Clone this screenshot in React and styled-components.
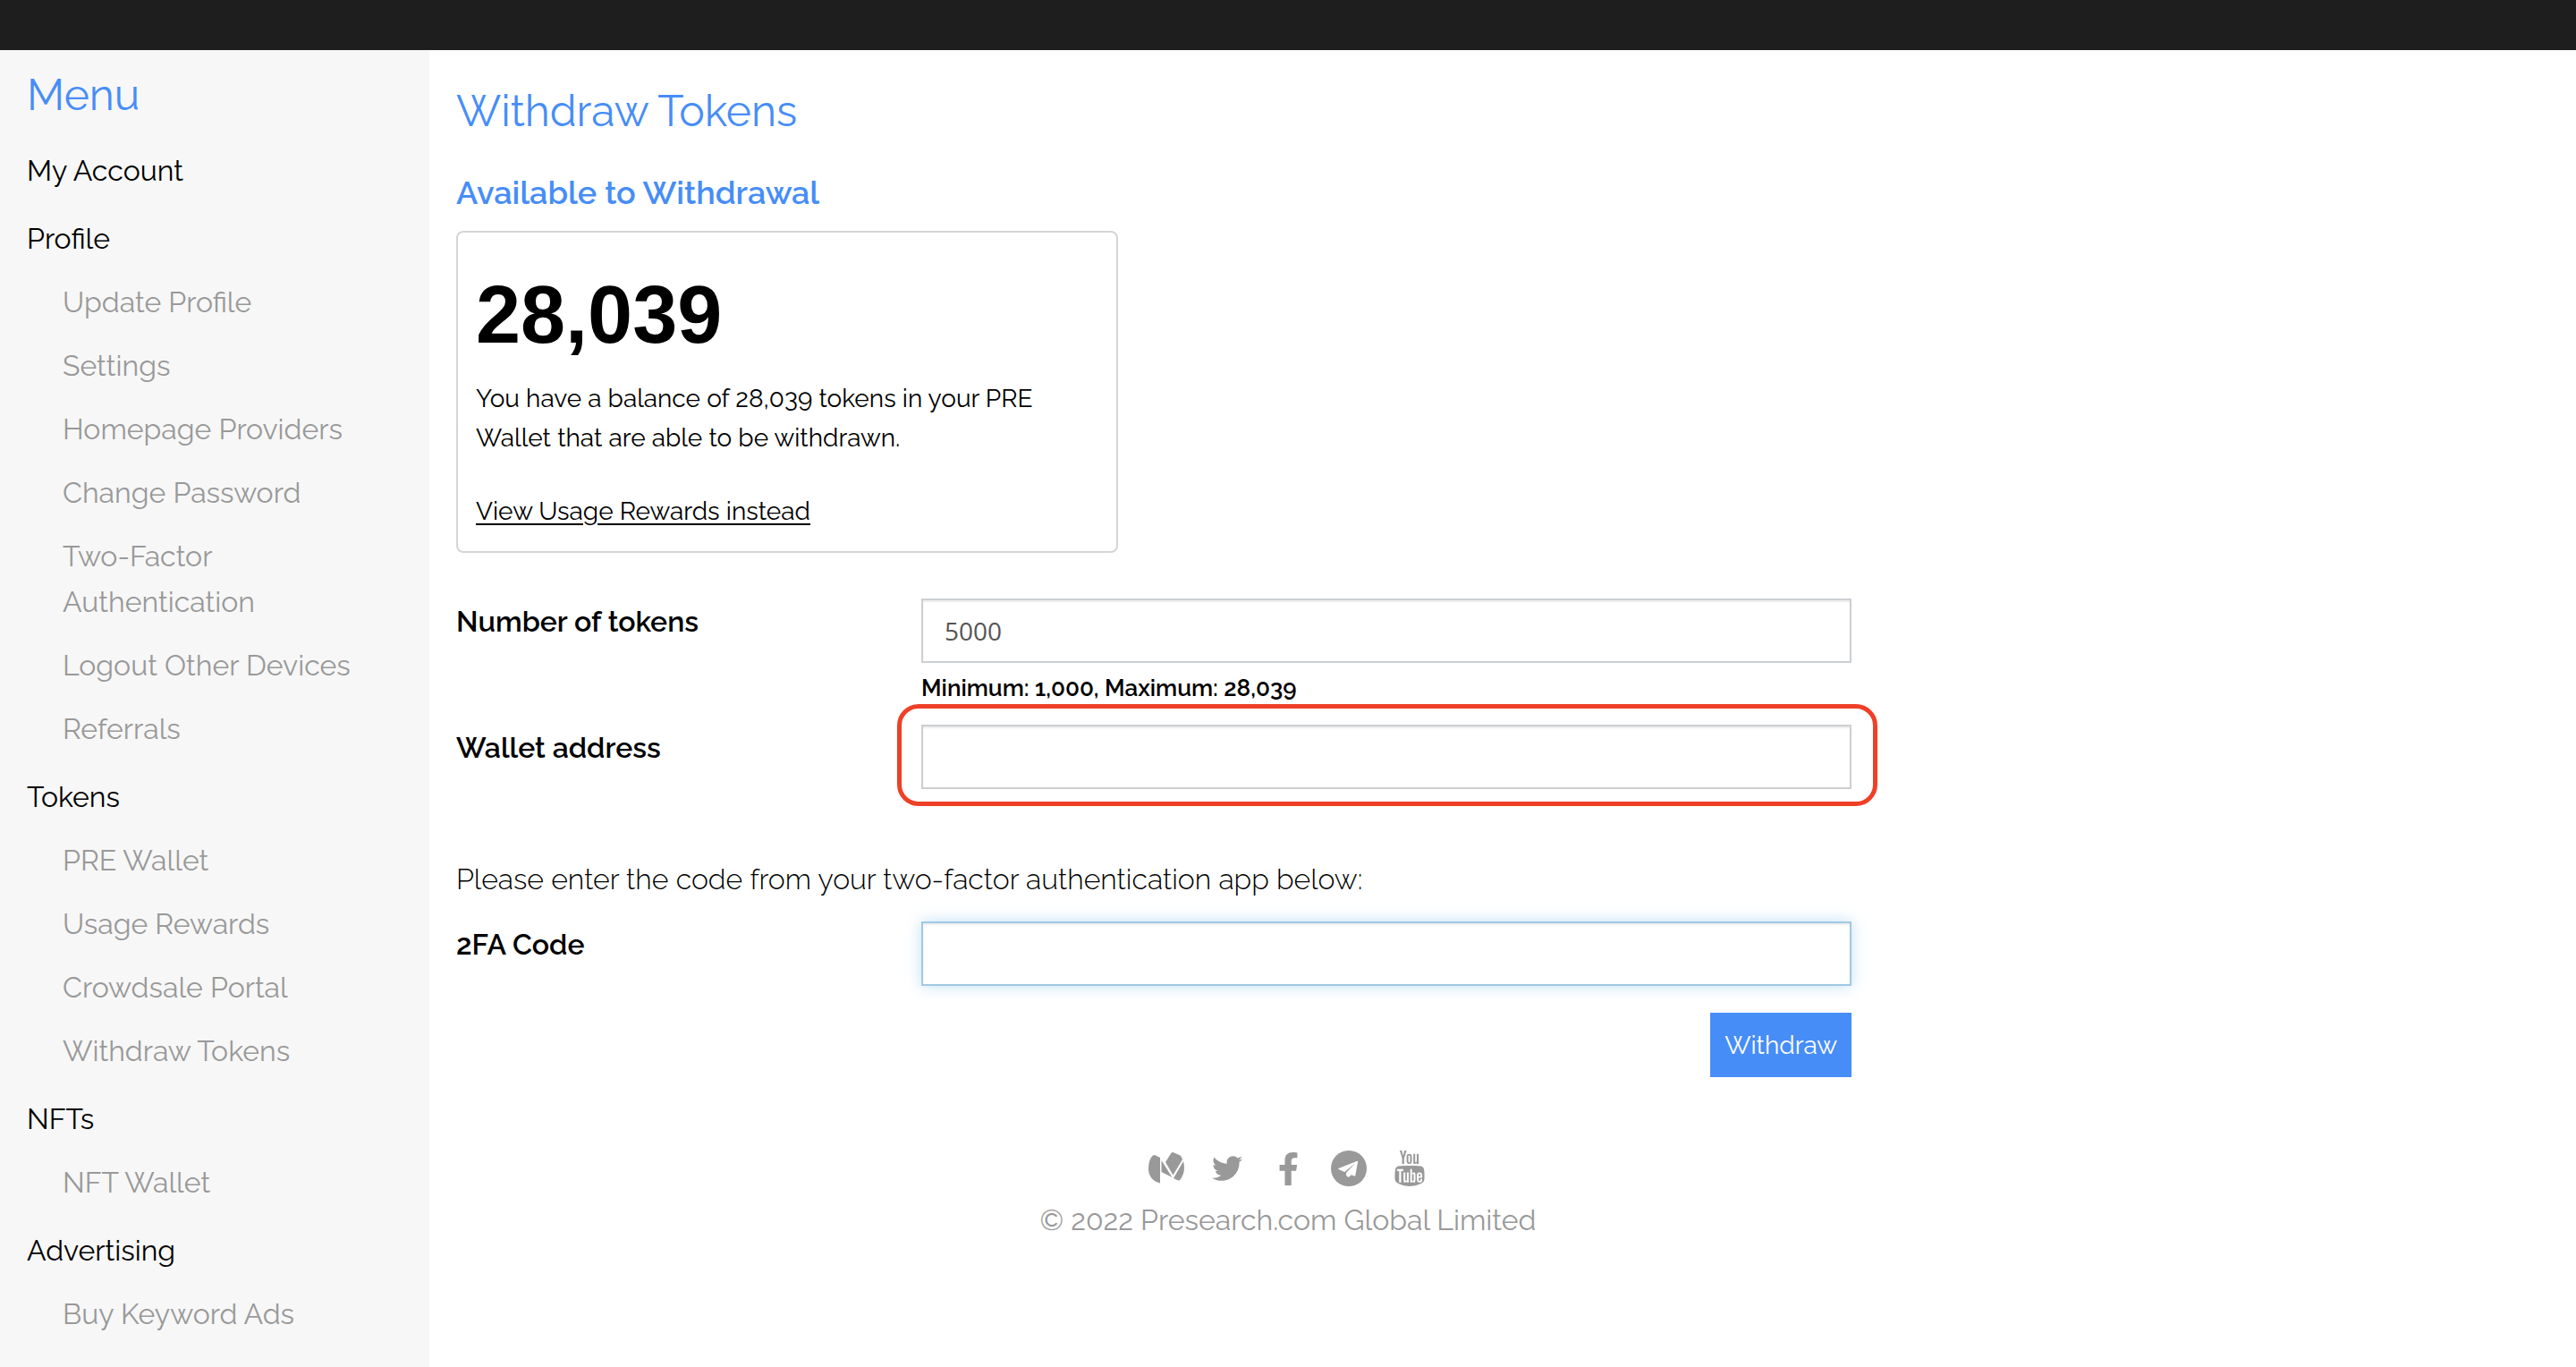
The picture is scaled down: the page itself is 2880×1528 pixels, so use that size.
import React from "react";
import styled, { createGlobalStyle, css } from "styled-components";
import { FaTwitter, FaFacebookF } from "react-icons/fa";
import { TfiYoutube } from "react-icons/tfi";

const GlobalStyle = createGlobalStyle`
  *, *::before, *::after { box-sizing: border-box; }
  body {
    margin: 0;
    background: #ffffff;
    color: #000000;
    font-family: Raleway, Lato, sans-serif;
    font-size: 32px;
    line-height: 51px;
  }
`;

const Page = styled.div`
  display: flex;
  flex-direction: column;
  min-height: 100vh;
`;

const TopBar = styled.header`
  flex: none;
  height: 56px;
  background: #1e1e1e;
`;

const Body = styled.div`
  flex: 1;
  display: grid;
  grid-template-columns: 1fr 4fr 1fr;
  grid-template-rows: auto 1fr;
`;

const Sidebar = styled.nav`
  grid-row: 1 / span 2;
  padding: 20px 30px;
  background: #f7f7f7;
`;

const Heading = styled.h1`
  margin: 0;
  color: #478df7;
  font-size: 48px;
  font-weight: 400;
  line-height: 60px;
`;

const MenuSection = styled.section`
  margin-top: 5px;
  &:first-of-type { margin-top: 19px; }
`;

const MenuTitle = styled.a`
  display: block;
  padding: 10px 0;
  color: #000000;
  text-decoration: none;
`;

const MenuList = styled.ul`
  margin: 0;
  padding: 0 40px;
  list-style: none;
`;

const MenuLink = styled.a`
  display: block;
  padding: 10px 0;
  color: #999999;
  text-decoration: none;
`;

const Main = styled.main`
  grid-column: 2 / span 2;
  width: 67.5%;
  padding: 38px 30px 0;
`;

const SubHeading = styled.h2`
  margin: 35px 0 17px;
  color: #478df7;
  font-size: 36px;
  font-weight: 600;
  line-height: 52px;
`;

const BalanceCard = styled.section`
  width: 740px;
  max-width: 100%;
  padding: 40px 20px 22px;
  border: 2px solid #d5d5d5;
  border-radius: 8px;
  font-size: 28px;
  line-height: 44px;
`;

const Amount = styled.strong`
  display: block;
  font-family: "Liberation Sans", Arial, sans-serif;
  font-size: 90px;
  line-height: 104px;
`;

const BalanceText = styled.p`
  margin: 20px 0 38px;
`;

const TextLink = styled.a`
  color: #000000;
  text-underline-offset: 4px;
`;

const Form = styled.form`
  margin-top: 51px;
`;

const FieldRow = styled.div`
  display: grid;
  grid-template-columns: 1fr 2fr;
  align-items: start;
`;

const Label = styled.label`
  font-weight: 600;
`;

const Control = styled.div`
  position: relative;
`;

const Input = styled.input`
  display: block;
  width: 100%;
  height: 72px;
  padding: 0 24px;
  border: 2px solid ${(p) => (p.$active ? "#9fc9e3" : "#cccfd2")};
  border-radius: 0;
  outline: none;
  background: #ffffff;
  color: #555555;
  font-family: "Open Sans", sans-serif;
  font-size: 28px;
  box-shadow: inset 0 2px 2px rgba(0, 0, 0, 0.08)
    ${(p) => p.$active && css`, 0 0 16px rgba(102, 175, 233, 0.4)`};
`;

const Hint = styled.small`
  display: block;
  padding: 5px 0 18px;
  font-size: 26px;
  font-weight: 600;
  line-height: 46px;
`;

const Highlight = styled.span`
  position: absolute;
  inset: -23px -29px -19px -27px;
  border: 5px solid #ee4027;
  border-radius: 24px;
  pointer-events: none;
`;

const Instruction = styled.p`
  margin: 75px 0 22px;
  font-weight: 300;
`;

const Actions = styled.div`
  display: flex;
  justify-content: flex-end;
  margin-top: 30px;
`;

const SubmitButton = styled.button`
  height: 72px;
  padding: 0 16px;
  border: 0;
  background: #478df7;
  color: #ffffff;
  font-family: inherit;
  font-size: 28px;
`;

const Footer = styled.footer`
  grid-column: 2;
  display: flex;
  flex-direction: column;
  align-items: center;
  gap: 10px;
  padding-top: 80px;
  color: #999999;
`;

const SocialLinks = styled.div`
  display: flex;
  gap: 28px;
`;

const SocialLink = styled.a`
  display: grid;
  place-items: center;
  width: 40px;
  height: 44px;
  color: #999999;
`;

const YoutubeIcon = styled(TfiYoutube)`
  width: 40px;
  height: 40px;
  clip-path: inset(0 3px 0 3px round 0 0 17px 17px / 0 0 9px 9px);
`;

const MediumIcon = () => (
  <svg width="40" height="36" viewBox="0 0 40 36" fill="currentColor" aria-hidden="true">
    <path d="M13 6v28.500Q0 31 0 18Q0 8 5 3.500Q6 2.500 8 3.500z" />
    <path d="M14.500 9l12 19l-12-6z" />
    <path d="M19 11l6-9.500Q26-.5 28 .2l7.500 3.300Q37 4.500 38 8L27.500 25.500z" />
    <path d="M39 10Q42 22 35.500 30.500Q34.500 32 32 31L28 29z" />
  </svg>
);

const TelegramIcon = () => (
  <svg width="40" height="40" viewBox="0 0 40 40" aria-hidden="true">
    <circle cx="20" cy="20" r="20" fill="currentColor" />
    <path
      d="M8.500 20L29.500 11.700Q30.300 11.700 30.100 12.600L27.300 28Q27 29 26 28.600L22.700 27.200L20.300 29.600Q19.600 30.200 18.600 29.300L17 27.800L17 25L28 13.500L15.300 24L9 21.300Q8 20.600 8.500 20z"
      fill="#ffffff"
    />
  </svg>
);

const menu = [
  { title: "My Account", items: [] },
  {
    title: "Profile",
    items: [
      "Update Profile",
      "Settings",
      "Homepage Providers",
      "Change Password",
      "Two-Factor Authentication",
      "Logout Other Devices",
      "Referrals",
    ],
  },
  { title: "Tokens", items: ["PRE Wallet", "Usage Rewards", "Crowdsale Portal", "Withdraw Tokens"] },
  { title: "NFTs", items: ["NFT Wallet"] },
  { title: "Advertising", items: ["Buy Keyword Ads"] },
];

const socials = [
  { name: "Medium", icon: <MediumIcon /> },
  { name: "Twitter", icon: <FaTwitter size={34} /> },
  { name: "Facebook", icon: <FaFacebookF size={37} /> },
  { name: "Telegram", icon: <TelegramIcon /> },
  { name: "YouTube", icon: <YoutubeIcon /> },
];

export default function App() {
  return (
    <>
      <GlobalStyle />
      <Page>
        <TopBar />
        <Body>
          <Sidebar aria-label="Account">
            <Heading as="h2">Menu</Heading>
            {menu.map((section) => (
              <MenuSection key={section.title}>
                <MenuTitle href="#">{section.title}</MenuTitle>
                {section.items.length > 0 && (
                  <MenuList>
                    {section.items.map((item) => (
                      <li key={item}>
                        <MenuLink href="#">{item}</MenuLink>
                      </li>
                    ))}
                  </MenuList>
                )}
              </MenuSection>
            ))}
          </Sidebar>
          <Main>
            <Heading>Withdraw Tokens</Heading>
            <SubHeading>Available to Withdrawal</SubHeading>
            <BalanceCard>
              <Amount>28,039</Amount>
              <BalanceText>
                You have a balance of 28,039 tokens in your PRE Wallet that are able to be withdrawn.
              </BalanceText>
              <TextLink href="#">View Usage Rewards instead</TextLink>
            </BalanceCard>
            <Form onSubmit={(e) => e.preventDefault()}>
              <FieldRow>
                <Label htmlFor="tokens">Number of tokens</Label>
                <Control>
                  <Input id="tokens" defaultValue="5000" />
                  <Hint>Minimum: 1,000, Maximum: 28,039</Hint>
                </Control>
              </FieldRow>
              <FieldRow>
                <Label htmlFor="wallet">Wallet address</Label>
                <Control>
                  <Input id="wallet" />
                  <Highlight />
                </Control>
              </FieldRow>
              <Instruction>Please enter the code from your two-factor authentication app below:</Instruction>
              <FieldRow>
                <Label htmlFor="code">2FA Code</Label>
                <Control>
                  <Input id="code" $active />
                </Control>
              </FieldRow>
              <Actions>
                <SubmitButton type="submit">Withdraw</SubmitButton>
              </Actions>
            </Form>
          </Main>
          <Footer>
            <SocialLinks>
              {socials.map((s) => (
                <SocialLink key={s.name} href="#" aria-label={s.name}>
                  {s.icon}
                </SocialLink>
              ))}
            </SocialLinks>
            <span>© 2022 Presearch.com Global Limited</span>
          </Footer>
        </Body>
      </Page>
    </>
  );
}
